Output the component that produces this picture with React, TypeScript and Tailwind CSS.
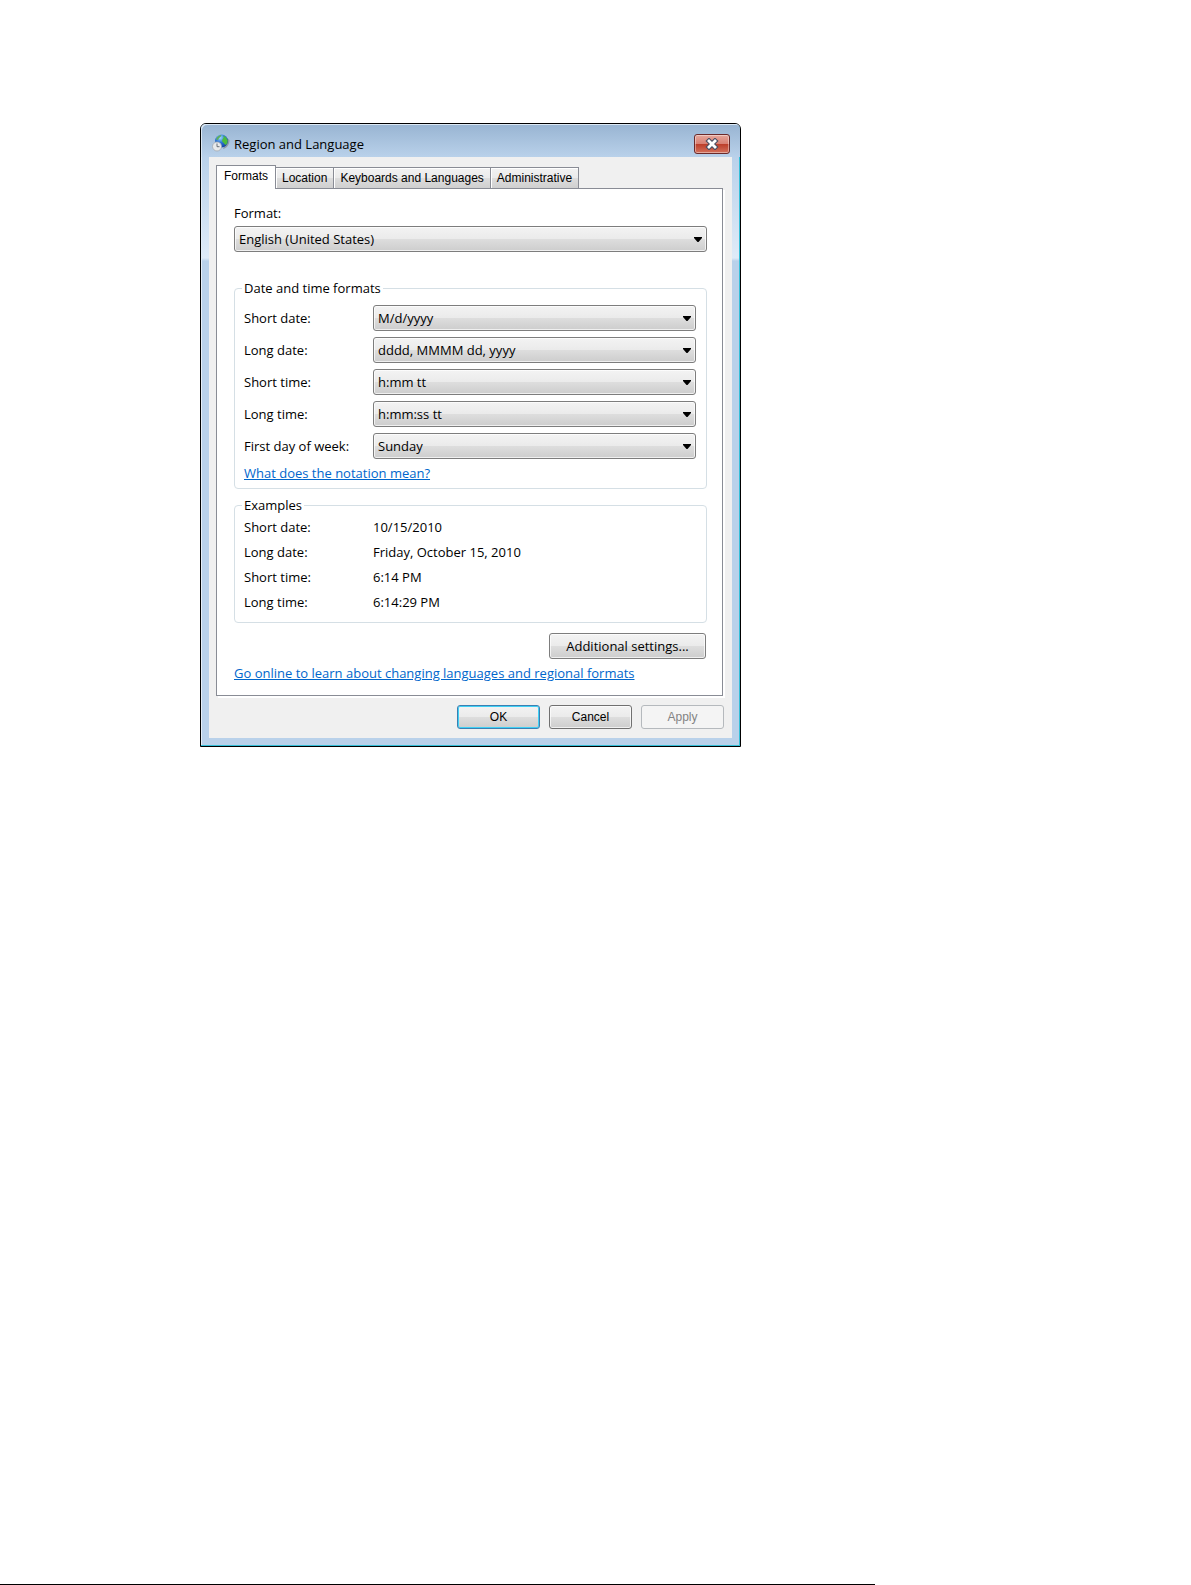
import React from "react";

const surface =
  "bg-[linear-gradient(#f3f3f3_0%,#ebebeb_48%,#dddddd_52%,#cdcdcd_100%)] shadow-[inset_0_0_0_1px_rgba(255,255,255,0.7)]";

function Combo({ id, options, className }: { id: string; options: string[]; className?: string }) {
  return (
    <div className={`relative ${className ?? ""}`}>
      <select
        id={id}
        className={`block h-[26px] w-full appearance-none rounded-[3px] border border-[#7d7d7d] pl-1 pr-6 text-[13px] leading-5 text-black ${surface}`}
      >
        {options.map((o) => (
          <option key={o}>{o}</option>
        ))}
      </select>
      <svg
        viewBox="0 0 8 5"
        className="pointer-events-none absolute right-[5px] top-[11px] h-[5px] w-2"
        aria-hidden="true"
      >
        <path d="M0 0h8v1L4.5 5h-1L0 1z" fill="#000" />
      </svg>
    </div>
  );
}

function GlobeIcon() {
  return (
    <svg viewBox="0 0 18 18" className="h-[18px] w-[18px]" aria-hidden="true">
      <defs>
        <radialGradient id="sea" cx="0.4" cy="0.25" r="0.8">
          <stop offset="0" stopColor="#9fdcfa" />
          <stop offset="0.45" stopColor="#2f78d8" />
          <stop offset="1" stopColor="#123f9c" />
        </radialGradient>
      </defs>
      <path d="M11 15c4-1 6.500-4.500 6.500-9L15 4z" fill="#8c9aa6" />
      <circle cx="9.500" cy="7" r="6.500" fill="url(#sea)" />
      <path d="M4 5.500C5 2.500 7 1.200 9.500 1L8.500 3 7 4 6 6z" fill="#5fae58" />
      <path d="M11 1.500l3 1.700 1.700 3-.4 3.300-2 1.500-1.600-2-1.700-1.700.6-2.300 1.200-1.300z" fill="#4cbb3c" />
      <circle cx="5" cy="12.500" r="4.500" fill="#e8eaec" stroke="#a3a9b0" strokeWidth="0.8" />
      <path d="M5 9.500v3.200h2.500" fill="none" stroke="#59626b" strokeWidth="0.9" />
    </svg>
  );
}

const tabs = ["Formats", "Location", "Keyboards and Languages", "Administrative"];

const formats = [
  { id: "short-date", label: "Short date:", options: ["M/d/yyyy", "M/d/yy", "MM/dd/yy"] },
  { id: "long-date", label: "Long date:", options: ["dddd, MMMM dd, yyyy", "MMMM dd, yyyy"] },
  { id: "short-time", label: "Short time:", options: ["h:mm tt", "hh:mm tt", "H:mm"] },
  { id: "long-time", label: "Long time:", options: ["h:mm:ss tt", "hh:mm:ss tt", "H:mm:ss"] },
  { id: "first-day", label: "First day of week:", options: ["Sunday", "Monday", "Tuesday"] },
];

const examples = [
  ["Short date:", "10/15/2010"],
  ["Long date:", "Friday, October 15, 2010"],
  ["Short time:", "6:14 PM"],
  ["Long time:", "6:14:29 PM"],
];

export default function App() {
  return (
    <div className="flex min-h-screen flex-col justify-between bg-white font-['Open_Sans',sans-serif] text-[13px] leading-5 text-black">
      <main className="pl-[200px] pt-[123px]">
        <section
          aria-label="Region and Language"
          className="w-full max-w-[541px] rounded-t-[6px] border border-black bg-[linear-gradient(#b9d1ea_33px,#dfebf8_134px,#b9d1ea_137px)] px-2 pb-2 shadow-[inset_-1px_-1px_0_#35bfd8,inset_1px_1px_0_#e4eef8]"
        >
          <header className="-mx-2 flex h-[33px] items-center rounded-t-[5px] bg-[linear-gradient(#98b4d2,#b9d1ea)] pl-[11px] pr-[10px] pt-1 shadow-[inset_1px_1px_0_#dce9f5]">
            <GlobeIcon />
            <h1 className="ml-1 mt-0.5 flex-1">Region and Language</h1>
            <button
              aria-label="Close"
              className="mt-0.5 flex h-5 w-9 items-center justify-center rounded-[3px] border border-[#6b2a2a] bg-[linear-gradient(#e6a79c_0%,#d98073_48%,#bd3f2b_52%,#d4715c_100%)] shadow-[inset_0_0_0_1px_rgba(255,255,255,0.4)]"
            >
              <svg viewBox="0 0 14 12" className="h-3 w-[14px]" aria-hidden="true">
                <path d="M4 3l6 6M10 3l-6 6" stroke="#4a4f63" strokeWidth="5" strokeLinecap="square" />
                <path d="M4 3l6 6M10 3l-6 6" stroke="#fff" strokeWidth="2.800" strokeLinecap="square" />
              </svg>
            </button>
          </header>
          <div className="bg-[#f0f0f0] px-[7px] pb-[9px] pt-2">
            <div role="tablist" className="flex items-end font-['Liberation_Sans',sans-serif] text-xs">
              {tabs.map((t, i) => (
                <button
                  key={t}
                  role="tab"
                  aria-selected={i === 0}
                  className={
                    i === 0
                      ? "relative z-10 -mb-px h-6 border border-b-0 border-[#898c95] bg-white px-[7px] pb-1"
                      : "h-[21px] border border-b-0 border-l-0 border-[#898c95] bg-[linear-gradient(#f2f2f2_0%,#ebebeb_48%,#dddddd_52%,#cfcfcf_100%)] px-1.5 shadow-[inset_1px_1px_0_#fff]"
                  }
                >
                  {t}
                </button>
              ))}
            </div>
            <div
              role="tabpanel"
              className="mr-0.5 border border-[#898c95] bg-white pb-3 pl-[17px] pr-[15px] pt-[14px] shadow-[2px_2px_0_#fff]"
            >
              <label htmlFor="format" className="block">
                Format:
              </label>
              <Combo id="format" options={["English (United States)", "English (United Kingdom)"]} className="mt-[3px]" />

              <fieldset className="mt-[26px] rounded-[4px] border border-[#d5dfe5] pb-[5px] pl-[9px] pr-[10px]">
                <legend className="-ml-0.5 px-0.5">Date and time formats</legend>
                <div className="mt-[7px] flex flex-col gap-[6px]">
                  {formats.map((f) => (
                    <div key={f.id} className="flex items-center">
                      <label htmlFor={f.id} className="w-[129px]">
                        {f.label}
                      </label>
                      <Combo id={f.id} options={f.options} className="flex-1" />
                    </div>
                  ))}
                </div>
                <a href="#notation" className="mt-1 inline-block text-[#0066cc] underline">
                  What does the notation mean?
                </a>
              </fieldset>

              <fieldset className="mt-[6px] rounded-[4px] border border-[#d5dfe5] px-[9px] pb-[10px]">
                <legend className="-ml-0.5 px-0.5">Examples</legend>
                <dl className="mt-0.5 flex flex-col gap-[5px]">
                  {examples.map(([k, v]) => (
                    <div key={k} className="flex">
                      <dt className="w-[129px]">{k}</dt>
                      <dd>{v}</dd>
                    </div>
                  ))}
                </dl>
              </fieldset>

              <div className="mt-[10px] flex justify-end pr-px">
                <button className={`h-[26px] w-[157px] rounded-[3px] border border-[#7d7d7d] ${surface}`}>
                  Additional settings...
                </button>
              </div>
              <a href="#online" className="mt-1 inline-block text-[#0066cc] underline">
                Go online to learn about changing languages and regional formats
              </a>
            </div>
            <div className="mt-[9px] flex justify-end gap-[9px] pr-px font-['Liberation_Sans',sans-serif] text-xs">
              <button className="h-6 w-[83px] rounded-[3px] border border-[#3c7fb1] bg-[linear-gradient(#f3f3f3_0%,#ebebeb_48%,#dddddd_52%,#cdcdcd_100%)] shadow-[inset_0_0_0_1px_#3fd0f5]">
                OK
              </button>
              <button className={`h-6 w-[83px] rounded-[3px] border border-[#707070] ${surface}`}>Cancel</button>
              <button
                disabled
                className="h-6 w-[83px] rounded-[3px] border border-[#b5b9bd] bg-[#f4f4f4] text-[#838383]"
              >
                Apply
              </button>
            </div>
          </div>
        </section>
      </main>
      <footer className="h-px w-[875px] max-w-full bg-black" />
    </div>
  );
}
